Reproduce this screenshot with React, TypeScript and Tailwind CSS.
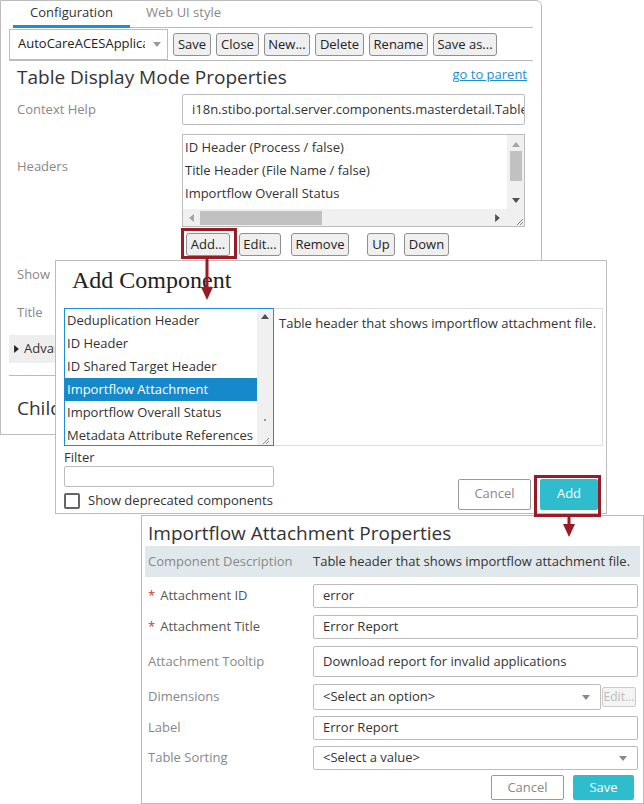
import type { ReactNode } from 'react';

const sans = "font-['Open_Sans',sans-serif]";

function Tri({ dir, className = '' }: { dir: 'up' | 'down' | 'left' | 'right'; className?: string }) {
  const pts = {
    up: '0,6 5,0 10,6',
    down: '0,0 10,0 5,6',
    left: '6,0 6,10 0,5',
    right: '0,0 0,10 6,5',
  }[dir];
  const vb = dir === 'up' || dir === 'down' ? '0 0 10 6' : '0 0 6 10';
  const size = dir === 'up' || dir === 'down' ? 'w-[8px] h-[5px]' : 'w-[5px] h-[8px]';
  return (
    <svg viewBox={vb} className={`${size} ${className}`}>
      <polygon points={pts} fill="currentColor" />
    </svg>
  );
}

function Grip() {
  return (
    <svg viewBox="0 0 10 10" className="w-[10px] h-[10px]">
      <path d="M9 3 L3 9 M9 6 L6 9" stroke="#888" strokeWidth="1" />
    </svg>
  );
}

function Btn({ children, className = '' }: { children: ReactNode; className?: string }) {
  return (
    <button className={`h-[23px] px-0 bg-[#efefef] border border-[#8f8f8f] rounded-[3px] text-[13px] leading-none text-[#222] ${className}`}>
      {children}
    </button>
  );
}

function Input({ value, h = 'h-[24px]' }: { value: string; h?: string }) {
  return (
    <div className={`flex-1 ${h} border border-[#bcbcbc] rounded-[2px] flex items-center pl-[9px] text-[13px] text-[#333] whitespace-nowrap overflow-hidden`}>
      {value}
    </div>
  );
}

function MainPanel() {
  return (
    <div className="absolute left-0 top-0 w-[542px] h-[435px] border border-[#bcbcbc] rounded-tr-[6px] bg-white">
      <div className="flex h-[27px] pl-[12px] pr-[8px]">
        <div className="w-[117px] border-b-[3px] border-[#1a8fd4] text-center text-[13px] text-[#333] pt-[2px]">Configuration</div>
        <div className="flex-1 border-b border-[#bcbcbc] pl-[16px] pt-[2px] text-[13px] text-[#888]">Web UI style</div>
      </div>
      <div className="mx-[8px] flex items-center gap-[5px] h-[33px] border-b border-[#bcbcbc]">
        <div className="w-[159px] h-[31px] border border-[#bcbcbc] flex items-center pl-[8px] pr-[6px] text-[13px] text-[#222]">
          <span className="w-[127px] overflow-hidden whitespace-nowrap">AutoCareACESApplications</span>
          <Tri dir="down" className="ml-auto text-[#999]" />
        </div>
        <Btn className="w-[38px]">Save</Btn>
        <Btn className="w-[43px]">Close</Btn>
        <Btn className="w-[46px]">New...</Btn>
        <Btn className="w-[49px]">Delete</Btn>
        <Btn className="w-[59px]">Rename</Btn>
        <Btn className="w-[64px]">Save as...</Btn>
      </div>
      <div className="flex justify-between items-start pl-[16px] pr-[14px] pt-[3px] h-[30px]">
        <div className="text-[19px] leading-[26px] text-[#333]">Table Display Mode Properties</div>
        <a className="text-[13px] text-[#1a8fd4] underline mt-[1px]">go to parent</a>
      </div>
      <div className="pl-[16px] pr-[16px]">
        <div className="flex items-center mt-[3px]">
          <div className="w-[165px] text-[13px] text-[#888]">Context Help</div>
          <Input value="i18n.stibo.portal.server.components.masterdetail.TableDisplayModeProperties" h="h-[31px]" />
        </div>
        <div className="flex mt-[9px]">
          <div className="w-[165px] text-[13px] text-[#888] pt-[23px]">Headers</div>
          <div className="flex-1 h-[93px] border border-[#bcbcbc] flex flex-col">
            <div className="flex flex-1">
              <div className="flex-1 pl-[2px] text-[13px] text-[#333] leading-[23px] pt-[1px] whitespace-nowrap overflow-hidden">
                <div>ID Header (Process / false)</div>
                <div>Title Header (File Name / false)</div>
                <div>Importflow Overall Status</div>
              </div>
              <div className="w-[17px] bg-[#f0f0f0] flex flex-col items-center pt-[7px]">
                <Tri dir="up" className="text-[#a3a3a3]" />
                <div className="w-[12px] h-[30px] bg-[#c1c1c1] mt-[4px]" />
                <Tri dir="down" className="text-[#505050] mt-auto mb-[6px]" />
              </div>
            </div>
            <div className="h-[17px] bg-[#f0f0f0] flex items-center">
              <Tri dir="left" className="text-[#a3a3a3] ml-[6px]" />
              <div className="w-[122px] h-[14px] bg-[#c1c1c1] ml-[6px]" />
              <Tri dir="right" className="text-[#505050] ml-auto mr-[7px]" />
              <div className="w-[17px] h-[17px] flex items-end justify-end">
                <Grip />
              </div>
            </div>
          </div>
        </div>
        <div className="flex items-center mt-[6px] pl-[169px]">
          <Btn className="w-[44px]">Add...</Btn>
          <Btn className="ml-[9px] w-[42px]">Edit...</Btn>
          <Btn className="ml-[10px] w-[58px]">Remove</Btn>
          <Btn className="ml-[18px] w-[28px]">Up</Btn>
          <Btn className="ml-[9px] w-[45px]">Down</Btn>
        </div>
        <div className="mt-[9px] text-[13px] leading-[18px] text-[#888]">Show</div>
        <div className="mt-[20px] text-[13px] leading-[18px] text-[#888]">Title</div>
      </div>
      <div className="mx-[8px] mt-[14px] h-[28px] bg-[#eeeeee] flex items-center pl-[5px] text-[13px] text-[#333]">
        <Tri dir="right" className="text-[#222] mr-[5px]" />
        Advanced
      </div>
      <div className="mx-[8px] mt-[12px] border-t border-[#bcbcbc]" />
      <div className="pl-[16px] mt-[19px] text-[19px] leading-[26px] text-[#333]">Children</div>
    </div>
  );
}

const components = [
  'Deduplication Header',
  'ID Header',
  'ID Shared Target Header',
  'Importflow Attachment',
  'Importflow Overall Status',
  'Metadata Attribute References',
];

function AddDialog() {
  return (
    <div className="absolute left-[55px] top-[260px] w-[552px] h-[254px] border border-[#bcbcbc] bg-white">
      <div className="pl-[16px] pt-[4px] font-['Liberation_Serif',serif] text-[24px] leading-[30px] text-[#222]">Add Component</div>
      <div className="flex ml-[8px] mt-[13px]">
        <div className="w-[210px] h-[138px] border border-[#1a8fd4] flex">
          <div className="flex-1 text-[13px] leading-[23px] text-[#333] whitespace-nowrap overflow-hidden">
            {components.map((c) => (
              <div key={c} className={`pl-[2px] ${c === 'Importflow Attachment' ? 'bg-[#1589c9] text-white' : ''}`}>
                {c}
              </div>
            ))}
          </div>
          <div className="w-[16px] bg-[#f0f0f0] flex flex-col items-center pt-[5px]">
            <Tri dir="up" className="text-[#505050]" />
            <div className="w-[2px] h-[2px] bg-[#999] mt-auto mb-[14px]" />
            <Grip />
          </div>
        </div>
        <div className="w-[329px] h-[138px] border border-l-0 border-[#dddddd] pl-[5px] pt-[5px] text-[13px] text-[#333]">
          Table header that shows importflow attachment file.
        </div>
      </div>
      <div className="flex justify-between items-end ml-[8px] mr-[8px]">
        <div>
          <div className="mt-[2px] text-[13px] leading-[18px] text-[#333]">Filter</div>
          <div className="w-[210px] h-[21px] border border-[#bcbcbc] rounded-[2px]" />
          <div className="flex items-center mt-[4px] gap-[8px]">
            <div className="w-[16px] h-[16px] border-2 border-[#666] rounded-[2px]" />
            <span className="text-[13px] text-[#333]">Show deprecated components</span>
          </div>
        </div>
        <div className="flex gap-[9px] mb-[1px]">
          <button className="w-[73px] h-[31px] border border-[#999] rounded-[2px] bg-white text-[13px] text-[#888]">Cancel</button>
          <button className="w-[58px] h-[31px] rounded-[2px] bg-[#2fbccd] text-[13px] text-white">Add</button>
        </div>
      </div>
    </div>
  );
}

function Row({ label, required, children, mt = 'mt-[7px]' }: { label: string; required?: boolean; children: ReactNode; mt?: string }) {
  return (
    <div className={`flex items-center ${mt}`}>
      <div className={`w-[165px] text-[13px] ${required ? 'text-[#555]' : 'text-[#888]'}`}>
        {required && <span className="text-[#c0392b] mr-[5px]">*</span>}
        {label}
      </div>
      {children}
    </div>
  );
}

function Select({ value, h }: { value: string; h: string }) {
  return (
    <div className={`flex-1 ${h} border border-[#bcbcbc] rounded-[2px] flex items-center pl-[9px] pr-[10px] text-[13px] text-[#333]`}>
      {value}
      <Tri dir="down" className="ml-auto text-[#888]" />
    </div>
  );
}

function PropsPanel() {
  return (
    <div className="absolute left-[141px] top-[515px] w-[503px] h-[289px] border border-[#bcbcbc] bg-white">
      <div className="pl-[6px] pt-[4px] text-[19px] leading-[26px] text-[#333]">Importflow Attachment Properties</div>
      <div className="mx-[3px] h-[31px] bg-[#e1e8eb] flex items-center text-[13px]">
        <div className="w-[168px] pl-[3px] text-[#888]">Component Description</div>
        <div className="text-[#333]">Table header that shows importflow attachment file.</div>
      </div>
      <div className="pl-[6px] pr-[5px]">
        <Row label="Attachment ID" required>
          <Input value="error" />
        </Row>
        <Row label="Attachment Title" required>
          <Input value="Error Report" />
        </Row>
        <Row label="Attachment Tooltip">
          <Input value="Download report for invalid applications" h="h-[31px]" />
        </Row>
        <Row label="Dimensions">
          <Select value="<Select an option>" h="h-[26px]" />
          <div className="w-[34px] h-[20px] ml-[1px] mr-[2px] border border-[#ccc] rounded-[2px] bg-[#f4f4f4] text-[12px] text-[#bbb] flex items-center justify-center">Edit...</div>
        </Row>
        <Row label="Label" mt="mt-[6px]">
          <Input value="Error Report" />
        </Row>
        <Row label="Table Sorting" mt="mt-[6px]">
          <Select value="<Select a value>" h="h-[24px]" />
        </Row>
        <div className="flex justify-end gap-[9px] mt-[5px] pr-[4px]">
          <button className="w-[73px] h-[25px] border border-[#999] rounded-[2px] bg-white text-[13px] text-[#888]">Cancel</button>
          <button className="w-[61px] h-[25px] rounded-[2px] bg-[#2fbccd] text-[13px] text-white">Save</button>
        </div>
      </div>
    </div>
  );
}

function Arrow({ className, len }: { className: string; len: number }) {
  return (
    <svg className={`absolute ${className}`} width="12" height={len} viewBox={`0 0 12 ${len}`}>
      <rect x="4.5" y="0" width="3" height={len - 10} fill="#9b1b24" />
      <polygon points={`0,${len - 13} 12,${len - 13} 6,${len}`} fill="#9b1b24" />
    </svg>
  );
}

export default function App() {
  return (
    <div className={`relative w-[644px] h-[804px] bg-white overflow-hidden ${sans}`}>
      <MainPanel />
      <AddDialog />
      <PropsPanel />
      {/* annotations */}
      <div className="absolute left-[181px] top-[228px] w-[56px] h-[31px] border-[3px] border-[#9b1b24]" />
      <Arrow className="left-[201px] top-[259px]" len={41} />
      <div className="absolute left-[534px] top-[475px] w-[67px] h-[42px] border-[3px] border-[#9b1b24]" />
      <Arrow className="left-[563px] top-[517px]" len={20} />
    </div>
  );
}
